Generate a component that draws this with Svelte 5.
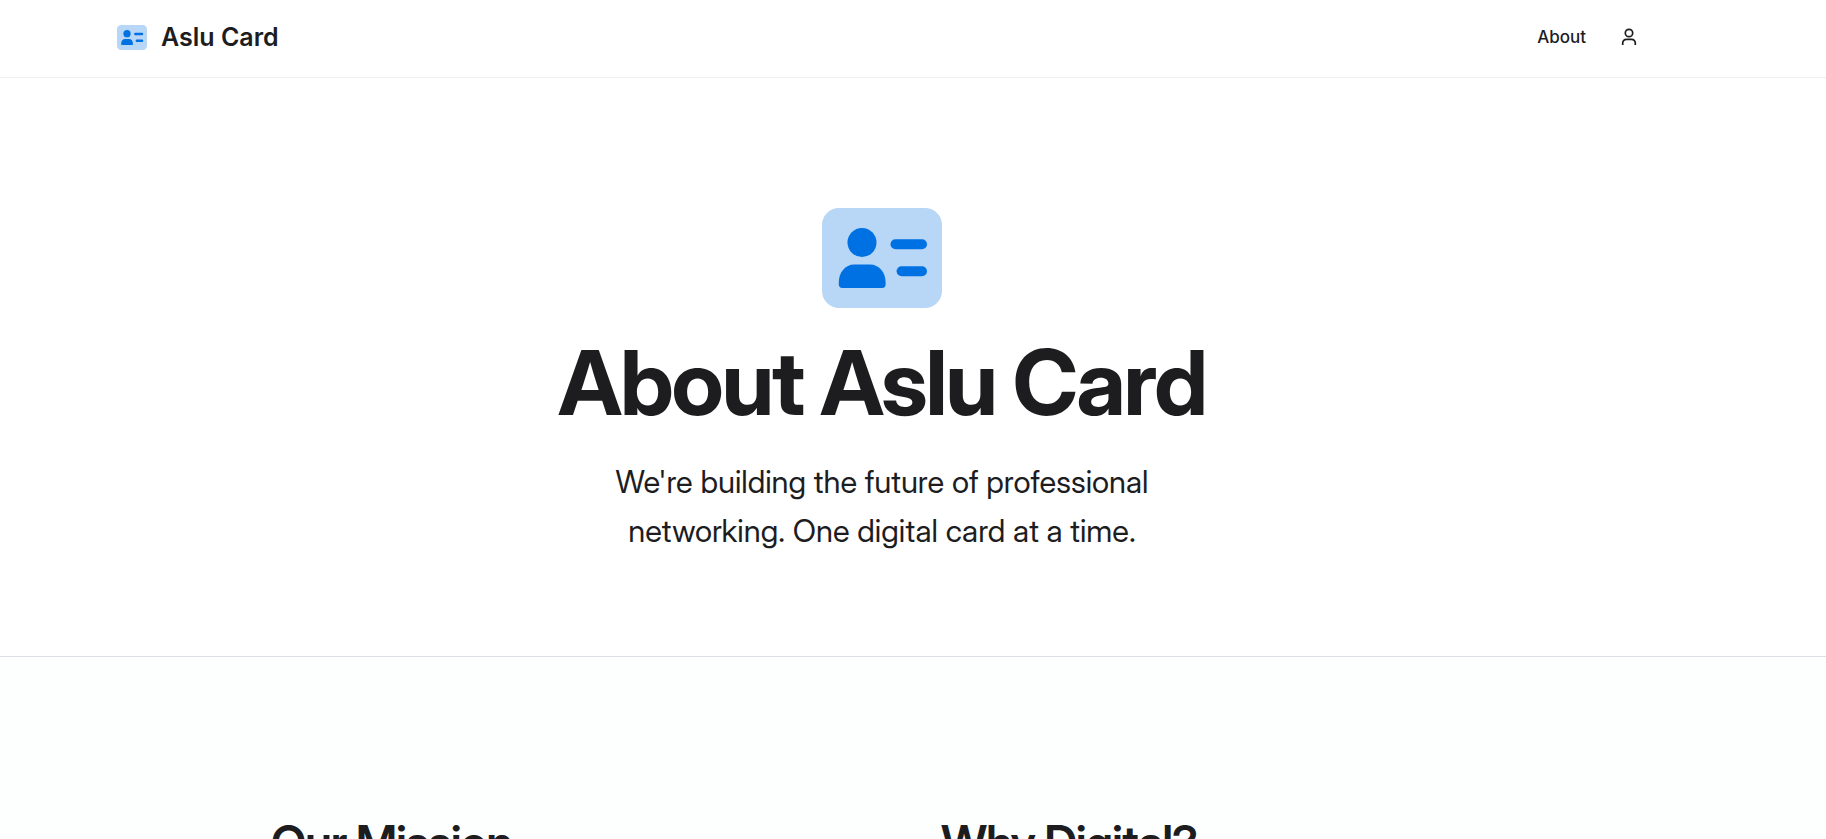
<script>
	const columns = ['Our Mission', 'Why Digital?']
</script>

{#snippet cardIcon()}
	<svg viewBox="0 0 120 100" aria-hidden="true">
		<rect width="120" height="100" rx="17" fill="#b8d6f6" />
		<g fill="#0071e3">
			<circle cx="40" cy="34.5" r="14.5" />
			<path d="M32 56.4h16c9 0 15.600 8 15.600 17.600v2.600c0 2.200-1.400 3.400-3.200 3.400H20c-1.800 0-3.200-1.200-3.200-3.400V74c0-9.600 6.600-17.600 15.200-17.600z" />
			<rect x="68.500" y="31.200" width="36.500" height="10" rx="5" />
			<rect x="74.600" y="58.300" width="30.400" height="10" rx="5" />
		</g>
	</svg>
{/snippet}

<div class="page">
	<header>
		<nav class="container">
			<a class="brand" href="/">
				{@render cardIcon()}
				<span>Aslu Card</span>
			</a>
			<div class="links">
				<a href="/about">About</a>
				<button type="button" aria-label="Account">
					<svg viewBox="0 0 18 18" fill="none" stroke="currentColor" stroke-width="1.7" aria-hidden="true">
						<circle cx="9" cy="5" r="3.700" />
						<path d="M2.700 17v-2a3.700 3.700 0 0 1 3.700-3.700h5.200a3.700 3.700 0 0 1 3.700 3.700v2" />
					</svg>
				</button>
			</div>
		</nav>
	</header>

	<main>
		<section class="hero">
			{@render cardIcon()}
			<h1>About Aslu Card</h1>
			<p>We're building the future of professional networking. One digital card at a time.</p>
		</section>

		<section class="story">
			<div class="columns">
				{#each columns as title}
					<h2>{title}</h2>
				{/each}
			</div>
		</section>
	</main>
</div>

<style>
	:global(body) {
		margin: 0;
		background: #fff;
	}

	.page {
		display: flex;
		flex-direction: column;
		height: 100vh;
		overflow: hidden;
		font-family: Inter, 'Liberation Sans', sans-serif;
		color: #1d1d1f;
	}

	header {
		flex: none;
		padding: 0 178px 0 117px;
		border-bottom: 1px solid #f0f0f1;
	}

	.container {
		display: flex;
		align-items: center;
		justify-content: space-between;
		padding: 17px 0 20px;
	}

	a {
		color: inherit;
		text-decoration: none;
	}

	.brand {
		display: flex;
		align-items: center;
		gap: 14px;
		font-size: 25px;
		font-weight: 600;
		line-height: 40px;
	}

	.brand svg {
		width: 30px;
		height: 25px;
	}

	.links {
		display: flex;
		align-items: center;
		gap: 24px;
		font-size: 17px;
		font-weight: 500;
		line-height: 40px;
	}

	button {
		display: flex;
		padding: 10px;
		border: 0;
		background: none;
		color: inherit;
	}

	button svg {
		width: 18px;
		height: 18px;
	}

	main {
		flex: 1;
		display: flex;
		flex-direction: column;
	}

	.hero {
		display: flex;
		flex-direction: column;
		align-items: center;
		padding: 130px 62px 101px 0;
		border-bottom: 1px solid #dcdfe6;
		text-align: center;
	}

	.hero svg {
		width: 120px;
		height: 100px;
	}

	h1,
	h2,
	p {
		font-family: 'Inter Display', Inter, 'Liberation Sans', sans-serif;
	}

	h1 {
		margin: 25px 0 24px;
		font-size: 90px;
		font-weight: 700;
		line-height: 100px;
		letter-spacing: -0.025em;
	}

	p {
		max-width: 640px;
		margin: 0;
		font-size: 31px;
		line-height: 49px;
	}

	.story {
		flex: 1 0 auto;
		padding: 156px 62px 0 0;
		background: #fcfffe;
	}

	.columns {
		display: grid;
		grid-template-columns: 1fr 1fr;
		gap: 118px;
		max-width: 1222px;
		margin: 0 auto;
	}

	h2 {
		margin: 0;
		font-size: 47px;
		font-weight: 600;
		line-height: 58px;
		letter-spacing: -0.025em;
	}
</style>
